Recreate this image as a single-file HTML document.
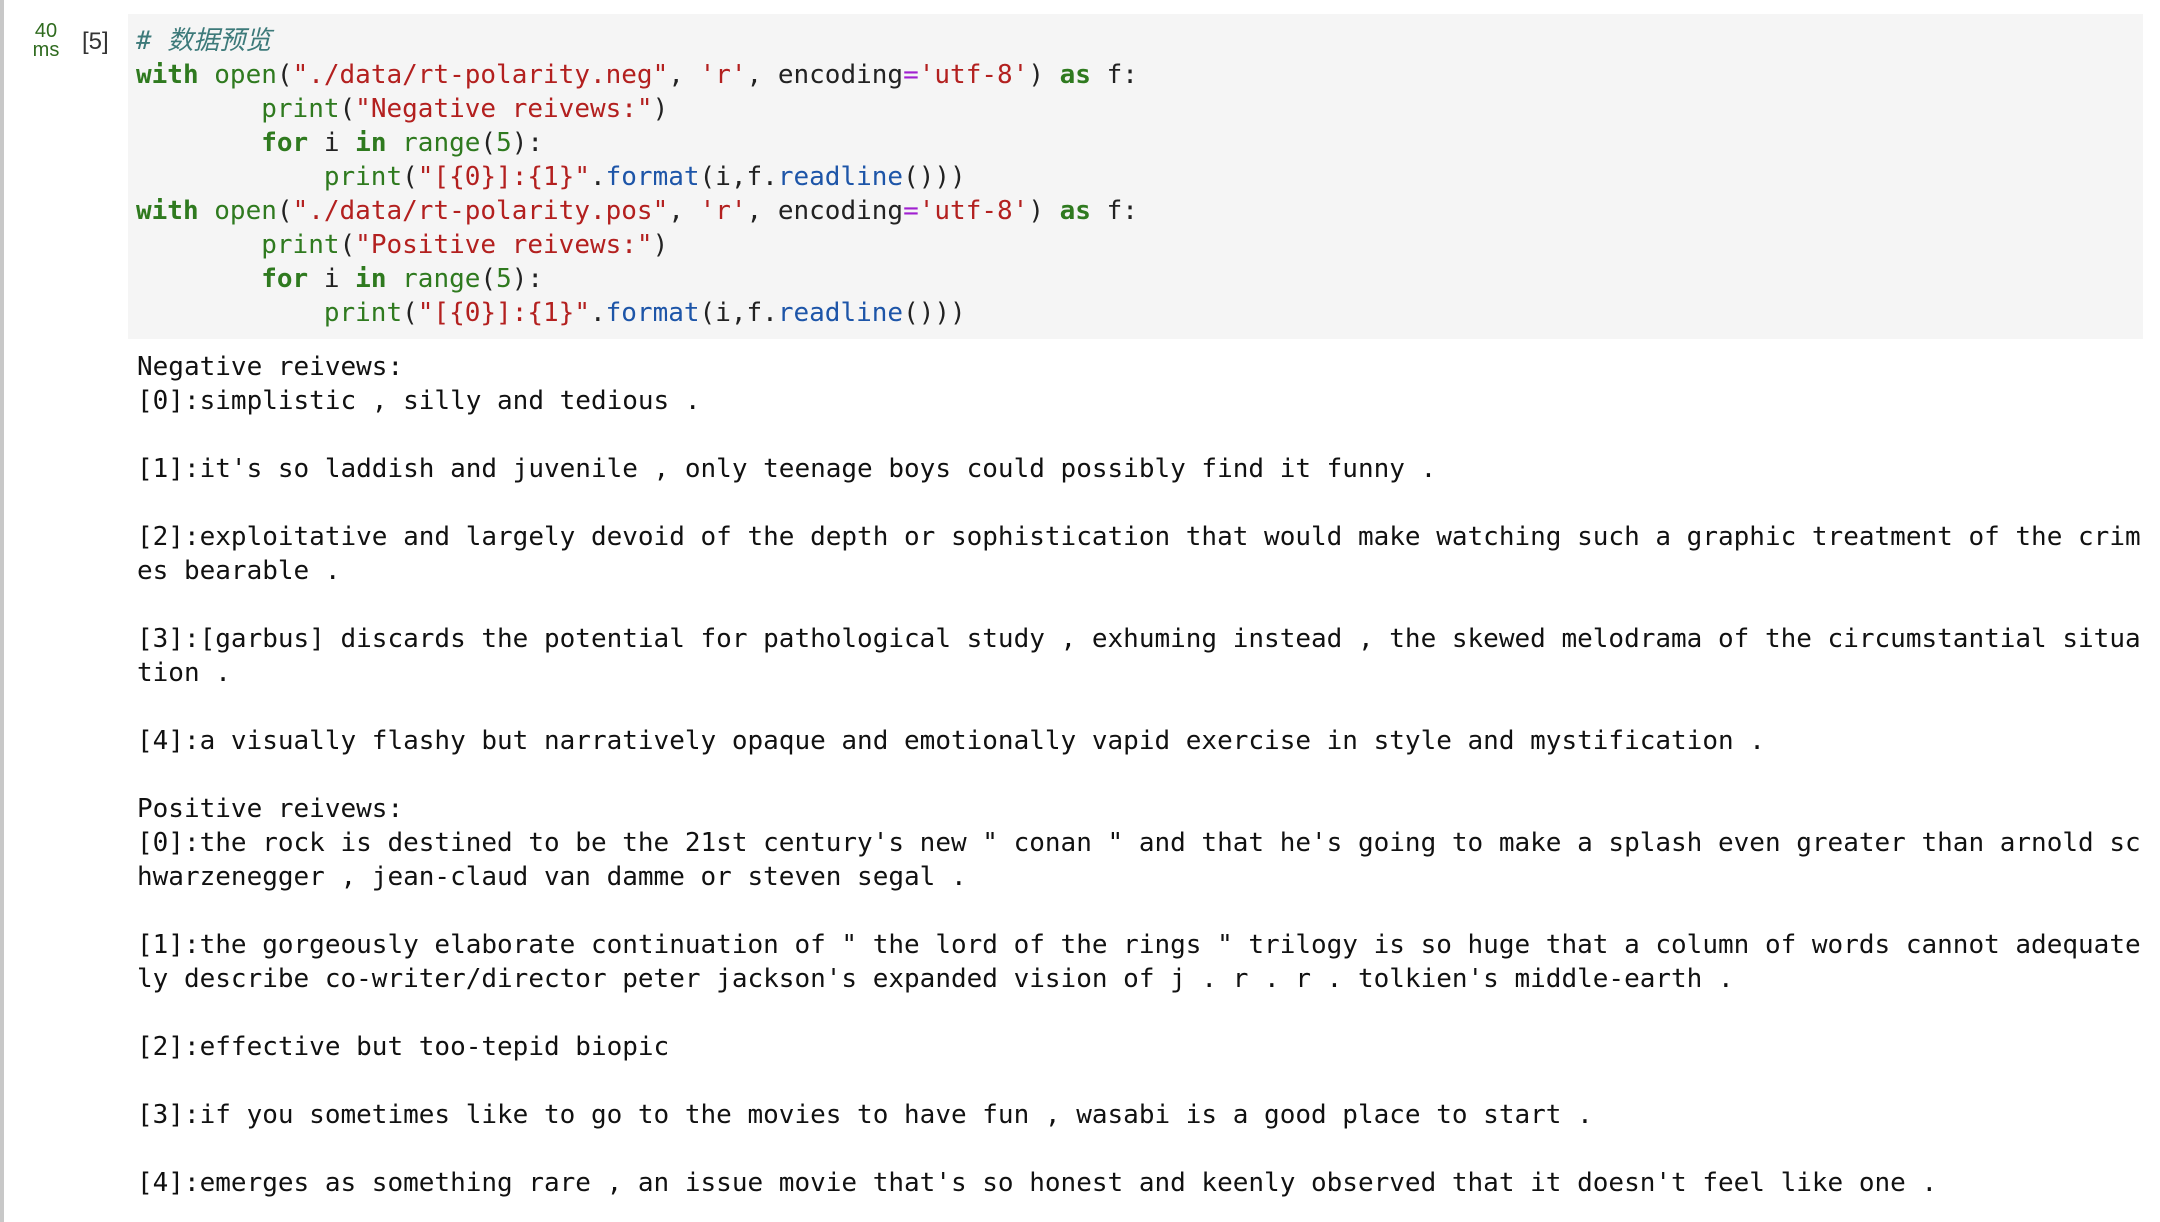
<!DOCTYPE html>
<html><head><meta charset="utf-8"><style>
html,body{margin:0;padding:0;background:#fff;width:2160px;height:1222px;overflow:hidden;position:relative}
.bar{position:absolute;left:0;top:0;width:4px;height:1222px;background:#c8c8c8}
.time{position:absolute;left:28px;top:22px;width:36px;text-align:center;font:20px/19px "Liberation Sans",sans-serif;color:#2f6b1f}
.cnt{position:absolute;left:82px;top:28px;font:24px/28px "Liberation Sans",sans-serif;color:#333}
.cell{position:absolute;left:128px;top:14px;width:2015px;height:325px;background:#f5f5f5}
pre{margin:0;font-family:"DejaVu Sans Mono","Liberation Mono","Noto Sans CJK SC",monospace;font-size:26px;line-height:34px;white-space:pre}
.code{position:absolute;left:136px;top:24px;color:#222}
.out{position:absolute;left:137px;top:350px;color:#111}
.k{color:#2f7a1f;font-weight:bold}
.b{color:#2f7a1f}
.s{color:#b3201f}
.c{color:#3d7a7a;font-style:italic}
.o{color:#a020d0}
.f{color:#1d55a8}
.n{color:#2f7a1f}
</style></head><body>
<div class="bar"></div>
<div class="time">40<br>ms</div>
<div class="cnt">[5]</div>
<div class="cell"></div>
<pre class="code"><span class="c"># 数据预览</span>
<span class="k">with</span> <span class="b">open</span>(<span class="s">"./data/rt-polarity.neg"</span>, <span class="s">'r'</span>, encoding<span class="o">=</span><span class="s">'utf-8'</span>) <span class="k">as</span> f:
        <span class="b">print</span>(<span class="s">"Negative reivews:"</span>)
        <span class="k">for</span> i <span class="k">in</span> <span class="b">range</span>(<span class="n">5</span>):
            <span class="b">print</span>(<span class="s">"[{0}]:{1}"</span>.<span class="f">format</span>(i,f.<span class="f">readline</span>()))
<span class="k">with</span> <span class="b">open</span>(<span class="s">"./data/rt-polarity.pos"</span>, <span class="s">'r'</span>, encoding<span class="o">=</span><span class="s">'utf-8'</span>) <span class="k">as</span> f:
        <span class="b">print</span>(<span class="s">"Positive reivews:"</span>)
        <span class="k">for</span> i <span class="k">in</span> <span class="b">range</span>(<span class="n">5</span>):
            <span class="b">print</span>(<span class="s">"[{0}]:{1}"</span>.<span class="f">format</span>(i,f.<span class="f">readline</span>()))</pre>
<pre class="out">Negative reivews:
[0]:simplistic , silly and tedious .

[1]:it's so laddish and juvenile , only teenage boys could possibly find it funny .

[2]:exploitative and largely devoid of the depth or sophistication that would make watching such a graphic treatment of the crim
es bearable .

[3]:[garbus] discards the potential for pathological study , exhuming instead , the skewed melodrama of the circumstantial situa
tion .

[4]:a visually flashy but narratively opaque and emotionally vapid exercise in style and mystification .

Positive reivews:
[0]:the rock is destined to be the 21st century's new " conan " and that he's going to make a splash even greater than arnold sc
hwarzenegger , jean-claud van damme or steven segal .

[1]:the gorgeously elaborate continuation of " the lord of the rings " trilogy is so huge that a column of words cannot adequate
ly describe co-writer/director peter jackson's expanded vision of j . r . r . tolkien's middle-earth .

[2]:effective but too-tepid biopic

[3]:if you sometimes like to go to the movies to have fun , wasabi is a good place to start .

[4]:emerges as something rare , an issue movie that's so honest and keenly observed that it doesn't feel like one .</pre>
</body></html>
